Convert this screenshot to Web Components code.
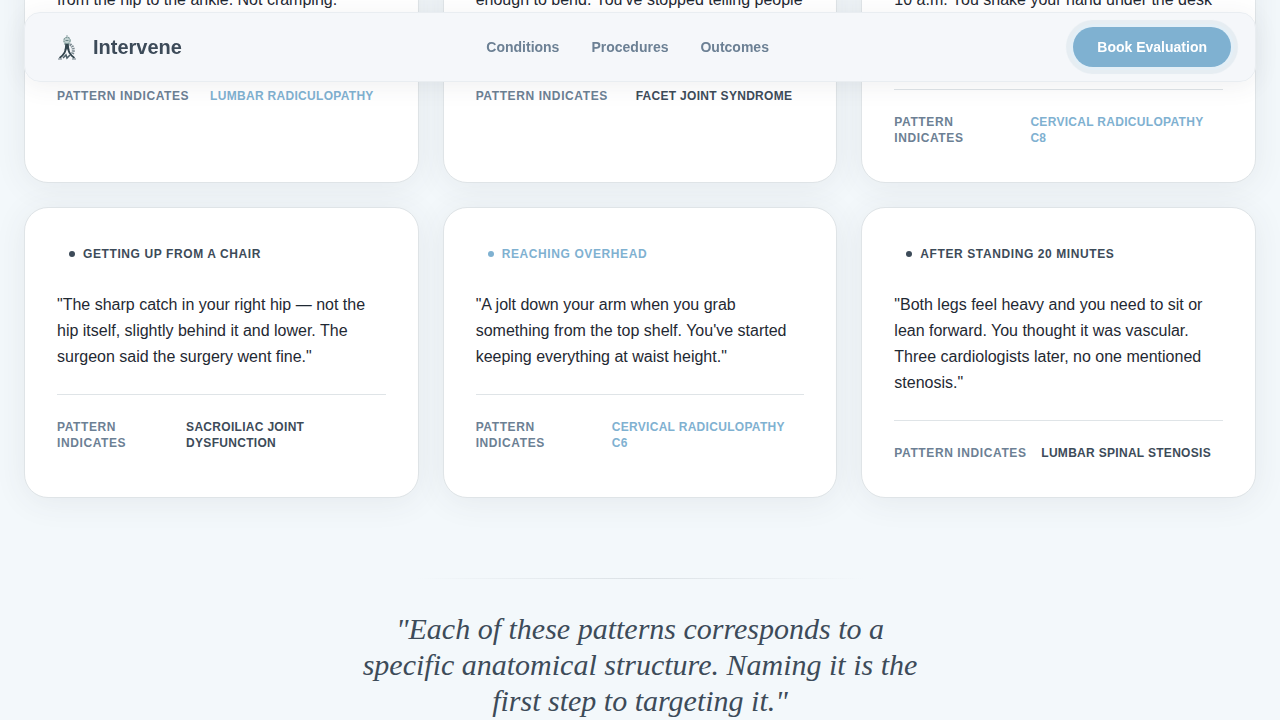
<!DOCTYPE html>
<html lang="en">
<head>
<meta charset="utf-8">
<meta name="viewport" content="width=device-width, initial-scale=1">
<title>Intervene</title>
<style>
  :root {
    --slate: #3d4b59;
    --muted: #6c8094;
    --sky: #7fb1d1;
    --ink: #1f2933;
    --line: #dfe4e7;
  }
  body {
    margin: 0;
    background: #f3f8fb;
    color: var(--ink);
    font-family: "Liberation Sans", Arial, sans-serif;
  }
</style>
</head>
<body>
<iv-page>
  <iv-header slot="header"></iv-header>
  <iv-card lines="2" tone="sky" pattern="Lumbar Radiculopathy">from the hip to the ankle. Not cramping.</iv-card>
  <iv-card lines="2" pattern="Facet Joint Syndrome">enough to bend. You've stopped telling people</iv-card>
  <iv-card lines="3" tone="sky" pattern="Cervical Radiculopathy C8">10 a.m. You shake your hand under the desk</iv-card>
  <iv-card moment="Getting up from a chair" pattern="Sacroiliac Joint Dysfunction">"The sharp catch in your right hip — not the hip itself, slightly behind it and lower. The surgeon said the surgery went fine."</iv-card>
  <iv-card moment="Reaching overhead" tone="sky" pattern="Cervical Radiculopathy C6">"A jolt down your arm when you grab something from the top shelf. You've started keeping everything at waist height."</iv-card>
  <iv-card moment="After standing 20 minutes" pattern="Lumbar Spinal Stenosis">"Both legs feel heavy and you need to sit or lean forward. You thought it was vascular. Three cardiologists later, no one mentioned stenosis."</iv-card>
  <iv-pullquote slot="after">"Each of these patterns corresponds to a specific anatomical structure. Naming it is the first step to targeting it."</iv-pullquote>
</iv-page>

<script>
const define = (name, html, setup) => {
  const template = document.createElement('template');
  template.innerHTML = html;
  customElements.define(name, class extends HTMLElement {
    constructor() {
      super();
      this.attachShadow({ mode: 'open' }).append(template.content.cloneNode(true));
    }
    connectedCallback() {
      if (setup) setup(this, this.shadowRoot);
    }
  });
};

define('iv-page', `
  <style>
    :host { display: block; min-height: 100vh; overflow: hidden; }
    main { --scrolled: 46px; margin-top: calc(-1 * var(--scrolled)); padding: 0 24px; }
    .cards { display: grid; grid-template-columns: repeat(3, minmax(0, 1fr)); gap: 24px; }
  </style>
  <slot name="header"></slot>
  <main>
    <div class="cards"><slot></slot></div>
    <slot name="after"></slot>
  </main>
`);

define('iv-header', `
  <style>
    :host { display: block; position: fixed; top: 12px; left: 24px; right: 24px; z-index: 10; }
    header {
      display: flex; align-items: center; justify-content: space-between;
      padding: 14px 24px 14px 32px;
      border: 1px solid #e9edf1; border-radius: 16px;
      background: rgba(244, 247, 250, .95);
      backdrop-filter: blur(16px);
      box-shadow: 0 4px 24px rgba(61, 70, 78, .08);
    }
    a { color: inherit; text-decoration: none; }
    .brand { display: flex; align-items: center; gap: 12px; color: var(--slate); font-size: 20px; line-height: 28px; font-weight: 700; }
    svg { width: 24px; height: 28px; }
    nav { display: flex; gap: 32px; color: var(--muted); font-size: 14px; line-height: 20px; font-weight: 700; }
    button {
      padding: 10px 24px; border: 0; border-radius: 20px;
      background: var(--sky); color: #fff;
      font: 700 14px/20px "Liberation Sans", Arial, sans-serif;
      box-shadow: 0 0 0 3px #e3eff7, 0 0 1px 7px #e6edf2;
    }
  </style>
  <header>
    <a class="brand" href="#">
      <svg viewBox="0 0 24 28" fill="none" aria-hidden="true">
        <path d="M10 2v4" stroke="#8fa3a5" stroke-width="1"/>
        <circle cx="10" cy="7.500" r="3.200" fill="#c3d3d3" stroke="#7f9998" stroke-width="1.200" stroke-dasharray="2 .6"/>
        <path d="M7 11h6M8.500 7.500h3" stroke="#6f8a8c" stroke-width="1"/>
        <path d="M9.500 11c0 6-2.500 11-7 14M10.500 11c0 6 2.500 11 7 14" stroke="#34464f" stroke-width="1.800"/>
        <path d="M8.500 11h3l1 6-2.500-2-2.500 2z" fill="#34464f"/>
        <path d="M13 11.500c4 2 4 7 2 10" stroke="#7b8990" stroke-width="3" stroke-dasharray="1.500 .8"/>
        <path d="M6 25l3-3 1 3 3-3" stroke="#4d5f68" stroke-width="1.500"/>
        <path d="M1 26h4M15 26h4" stroke="#6d7b83" stroke-width="1.200"/>
      </svg>
      <span>Intervene</span>
    </a>
    <nav aria-label="Main">
      <a href="#conditions">Conditions</a>
      <a href="#procedures">Procedures</a>
      <a href="#outcomes">Outcomes</a>
    </nav>
    <button type="button">Book Evaluation</button>
  </header>
`);

define('iv-card', `
  <style>
    :host {
      --tone: var(--slate);
      display: block; box-sizing: border-box; padding: 32px;
      border: 1px solid var(--line); border-radius: 24px;
      background: #fff;
      box-shadow: 0 4px 32px rgba(61, 70, 78, .08);
    }
    :host([tone="sky"]) { --tone: var(--sky); }
    .moment, .result { font-size: 12px; line-height: 16px; font-weight: 700; text-transform: uppercase; }
    .moment {
      display: flex; align-items: center; gap: 8px;
      margin-bottom: 24px; padding: 6px 12px;
      color: var(--tone); letter-spacing: .05em;
    }
    .moment[hidden] { display: none; }
    .moment::before { content: ""; width: 6px; height: 6px; border-radius: 50%; background: var(--tone); }
    p { margin: 0 0 24px; min-height: calc(var(--lines, 0) * 26px); font-size: 16px; line-height: 26px; }
    .result {
      display: flex; align-items: center; justify-content: space-between;
      padding-top: 20px; border-top: 1px solid var(--line);
    }
    .label { color: var(--muted); letter-spacing: .05em; }
    .pattern { padding: 4px 12px; color: var(--tone); letter-spacing: .025em; }
  </style>
  <div class="moment"></div>
  <p><slot></slot></p>
  <div class="result"><span class="label">Pattern indicates</span><span class="pattern"></span></div>
`, (host, root) => {
  const moment = root.querySelector('.moment');
  moment.textContent = host.getAttribute('moment') || '';
  moment.hidden = !host.hasAttribute('moment');
  root.querySelector('.pattern').textContent = host.getAttribute('pattern');
  if (host.hasAttribute('lines')) root.querySelector('p').style.setProperty('--lines', host.getAttribute('lines'));
});

define('iv-pullquote', `
  <style>
    :host { display: block; max-width: 576px; margin: 80px auto 0; }
    .rule { width: 448px; max-width: 100%; height: 1px; margin: 0 auto 32px; background: linear-gradient(90deg, transparent, #dbe1e5, transparent); }
    blockquote {
      margin: 0; color: var(--slate); text-align: center;
      font: italic 30px/36px "Liberation Serif", "Times New Roman", serif;
    }
  </style>
  <div class="rule"></div>
  <blockquote><slot></slot></blockquote>
`);
</script>
</body>
</html>
